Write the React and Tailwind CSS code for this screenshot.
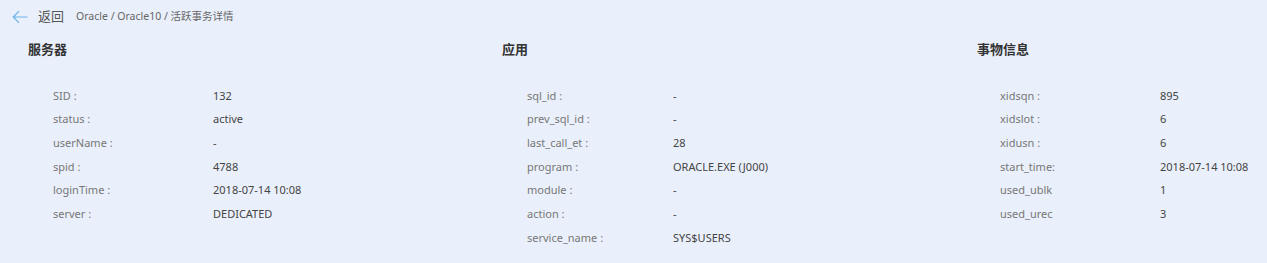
import React from "react";

const font = { fontFamily: '"Segoe UI", "Noto Sans", "Noto Sans CJK SC", sans-serif' };

const cols = [
  {
    title: "服务器",
    w: "w-[474px]",
    labelW: "w-[160px]",
    rows: [
      ["SID :", "132"],
      ["status :", "active"],
      ["userName :", "-"],
      ["spid :", "4788"],
      ["loginTime :", "2018-07-14 10:08"],
      ["server :", "DEDICATED"],
    ],
  },
  {
    title: "应用",
    w: "w-[475px]",
    labelW: "w-[146px]",
    rows: [
      ["sql_id :", "-"],
      ["prev_sql_id :", "-"],
      ["last_call_et :", "28"],
      ["program :", "ORACLE.EXE (J000)"],
      ["module :", "-"],
      ["action :", "-"],
      ["service_name :", "SYS$USERS"],
    ],
  },
  {
    title: "事物信息",
    w: "flex-1",
    labelW: "w-[160px]",
    pl: "pl-[23px]",
    rows: [
      ["xidsqn :", "895"],
      ["xidslot :", "6"],
      ["xidusn :", "6"],
      ["start_time:", "2018-07-14 10:08"],
      ["used_ublk", "1"],
      ["used_urec", "3"],
    ],
  },
];

export default function App() {
  return (
    <div className="w-[1267px] h-[263px] bg-[#eaf0fb] overflow-hidden" style={font}>
      <div className="flex items-center h-[34px] pl-[12px]">
        <svg width="16" height="14" viewBox="0 0 16 14" fill="none" stroke="#6cb2ea" strokeWidth="1.2">
          <path d="M15.5 7H1.2M7 1.2L1.2 7L7 12.8" />
        </svg>
        <span className="ml-[10px] text-[13px] text-[#555]">返回</span>
        <span className="ml-[12px] text-[10.5px] text-[#666]">Oracle / Oracle10 / 活跃事务详情</span>
      </div>
      <div className="flex pl-[28px]">
        {cols.map((c) => (
          <div key={c.title} className={c.w}>
            <div className="h-[32px] flex items-center text-[13px] font-semibold text-[#333]">{c.title}</div>
            <div className={"mt-[18px] " + (c.pl || "pl-[25px]")}>
              {c.rows.map(([k, v]) => (
                <div key={k} className="flex items-center h-[23.7px] text-[11px]">
                  <div className={c.labelW + " text-[#777]"}>{k}</div>
                  <div className="text-[#444]">{v}</div>
                </div>
              ))}
            </div>
          </div>
        ))}
      </div>
    </div>
  );
}
